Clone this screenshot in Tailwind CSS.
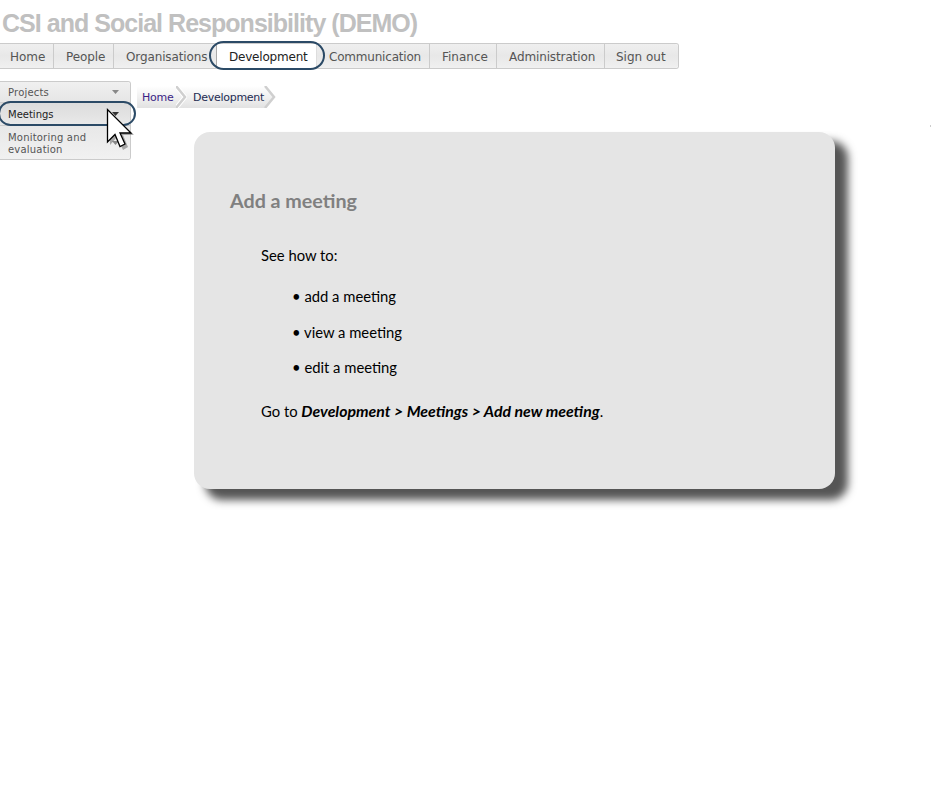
<!DOCTYPE html>
<html lang="en">
<head>
<meta charset="utf-8">
<title>CSI and Social Responsibility (DEMO)</title>
<script src="https://cdn.jsdelivr.net/npm/@tailwindcss/browser@4"></script>
</head>
<body class="relative h-[790px] w-[931px] overflow-hidden bg-white font-['DejaVu_Sans',sans-serif]">
<h1 class="h-[43px] whitespace-nowrap pl-[2px] pt-[8px] font-['Liberation_Sans',sans-serif] text-[25px] font-bold leading-[31px] tracking-[-0.97px] text-[#c0c0c0]">CSI and Social Responsibility (DEMO)</h1>

<nav class="flex h-[26px] w-[679px] rounded-r-[3px] border-y border-r border-[#cbcbcb] text-[12px] leading-[26px] text-[#555]">
  <a class="w-[54px] border-r border-[#cbcbcb] bg-linear-to-b from-[#efefef] via-[#e8e8e8] to-[#f0f0f0] pl-[10px]">Home</a>
  <a class="w-[60px] border-r border-[#cbcbcb] bg-linear-to-b from-[#efefef] via-[#e8e8e8] to-[#f0f0f0] pl-[12px] tracking-[-0.1px]">People</a>
  <a class="w-[103px] border-r border-[#aaa] bg-linear-to-b from-[#efefef] via-[#e8e8e8] to-[#f0f0f0] pl-[12px] tracking-[-0.12px]">Organisations</a>
  <a class="w-[100px] border-r border-[#ddd] bg-white pl-[12px] tracking-[-0.2px] text-[#222]">Development</a>
  <a class="w-[113px] border-r border-[#cbcbcb] bg-linear-to-b from-[#efefef] via-[#e8e8e8] to-[#f0f0f0] pl-[12px] tracking-[-0.2px]">Communication</a>
  <a class="w-[67px] border-r border-[#cbcbcb] bg-linear-to-b from-[#efefef] via-[#e8e8e8] to-[#f0f0f0] pl-[12px]">Finance</a>
  <a class="w-[108px] border-r border-[#cbcbcb] bg-linear-to-b from-[#efefef] via-[#e8e8e8] to-[#f0f0f0] pl-[12px] tracking-[-0.12px]">Administration</a>
  <a class="flex-1 rounded-r-[3px] bg-linear-to-b from-[#efefef] via-[#e8e8e8] to-[#f0f0f0] pl-[11px]">Sign out</a>
</nav>

<div class="flex items-start pt-[12px]">
  <aside class="h-[79px] w-[131px] rounded-r-[3px] border-y border-r border-[#cbcbcb] text-[10px] leading-[12px] tracking-[0.2px] text-[#555]">
    <div class="flex h-[21px] items-center justify-between rounded-tr-[3px] border-b border-[#ccc] bg-linear-to-b from-[#f0f0f0] to-[#e6e6e6] pl-[8px] pr-[11px]"><span class="pt-[2px]">Projects</span>
      <svg width="7" height="4" viewBox="0 0 7 4"><path d="M0 0H7L3.5 4Z" fill="#888"/></svg></div>
    <div class="flex h-[23px] items-center justify-between border-b border-[#ccc] bg-linear-to-b from-[#dcdcdc] to-[#e9e9e9] pl-[8px] pr-[11px] text-[#222]"><span class="pt-[2px] tracking-normal">Meetings</span>
      <svg width="7" height="4" viewBox="0 0 7 4"><path d="M0 0H7L3.5 4Z" fill="#333"/></svg></div>
    <div class="flex h-[33px] items-center justify-between rounded-br-[3px] bg-linear-to-b from-[#e8e8e8] to-[#f1f1f1] pl-[8px] pr-[11px]"><span class="pt-[2px]">Monitoring and<br>evaluation</span>
      <svg width="7" height="4" viewBox="0 0 7 4"><path d="M0 0H7L3.5 4Z" fill="#888"/></svg></div>
  </aside>

  <main class="ml-[6px]">
    <div class="mt-[5px] flex h-[22px] w-[138px] bg-linear-to-b from-white to-[#e2e2e2] text-[11px] leading-[23px]">
      <a class="flex w-[50px] justify-between pl-[5px] tracking-[-0.2px] text-[#3b1f85]">Home
        <svg class="shrink-0" width="11" height="22" viewBox="0 0 11 22"><path d="M0 0 9 11 0 22" fill="none" stroke="#fff" stroke-width="4.500"/><path d="M0 0 9 11 0 22" fill="none" stroke="#cfcfcf" stroke-width="2.500"/></svg></a>
      <a class="flex w-[88px] justify-between pl-[6px] tracking-[-0.27px] text-[#1d2b52]">Development
        <svg class="shrink-0" width="12" height="22" viewBox="0 0 12 22"><path d="M1 0H12V22H1L10 11Z" fill="#fff"/><path d="M1 0 10 11 1 22" fill="none" stroke="#cfcfcf" stroke-width="2.500"/></svg></a>
    </div>
    <section class="ml-[57px] mt-[24px] h-[357px] w-[641px] rounded-[16px] bg-[#e5e5e5] font-['Lato',sans-serif] text-[14.8px] leading-[20px] text-black shadow-[12px_10px_9px_1px_#555555]">
      <h2 class="pl-[36px] pt-[56px] text-[19.7px] font-bold leading-[26px] text-[#808080]">Add a meeting</h2>
      <p class="pl-[67px] pt-[31px]">See how to:</p>
      <ul class="pl-[98px] pt-[21px]">
        <li class="mb-[16px]">• <span>add a meeting</span></li>
        <li class="mb-[15px]">• <span>view a meeting</span></li>
        <li class="mb-[24px]">• <span>edit a meeting</span></li>
      </ul>
      <p class="pl-[67px]">Go to <b class="text-[15.85px] italic">Development &gt; Meetings &gt; Add new meeting</b>.</p>
    </section>
  </main>
</div>

<div class="absolute left-[209px] top-[41px] h-[29px] w-[116px] rounded-full border-2 border-[#2b4a66]"></div>
<div class="absolute left-[-2px] top-[101px] h-[25px] w-[138px] rounded-full border-2 border-[#2b4a66]"></div>
<svg class="absolute left-[105px] top-[107px]" width="32" height="44" viewBox="0 0 32 44"><path d="M5 5V38L12 30L18 43L23 40L18 28H29Z" fill="#777" opacity=".6"/><path d="M2.500 2.500V35L10 27.500L15 39.500L20 37L15 26H26Z" fill="#fff" stroke="#000" stroke-width="1.300"/></svg>
<div class="absolute left-[930px] top-[125px] h-[2px] w-px bg-[#ccc]"></div>
</body>
</html>
